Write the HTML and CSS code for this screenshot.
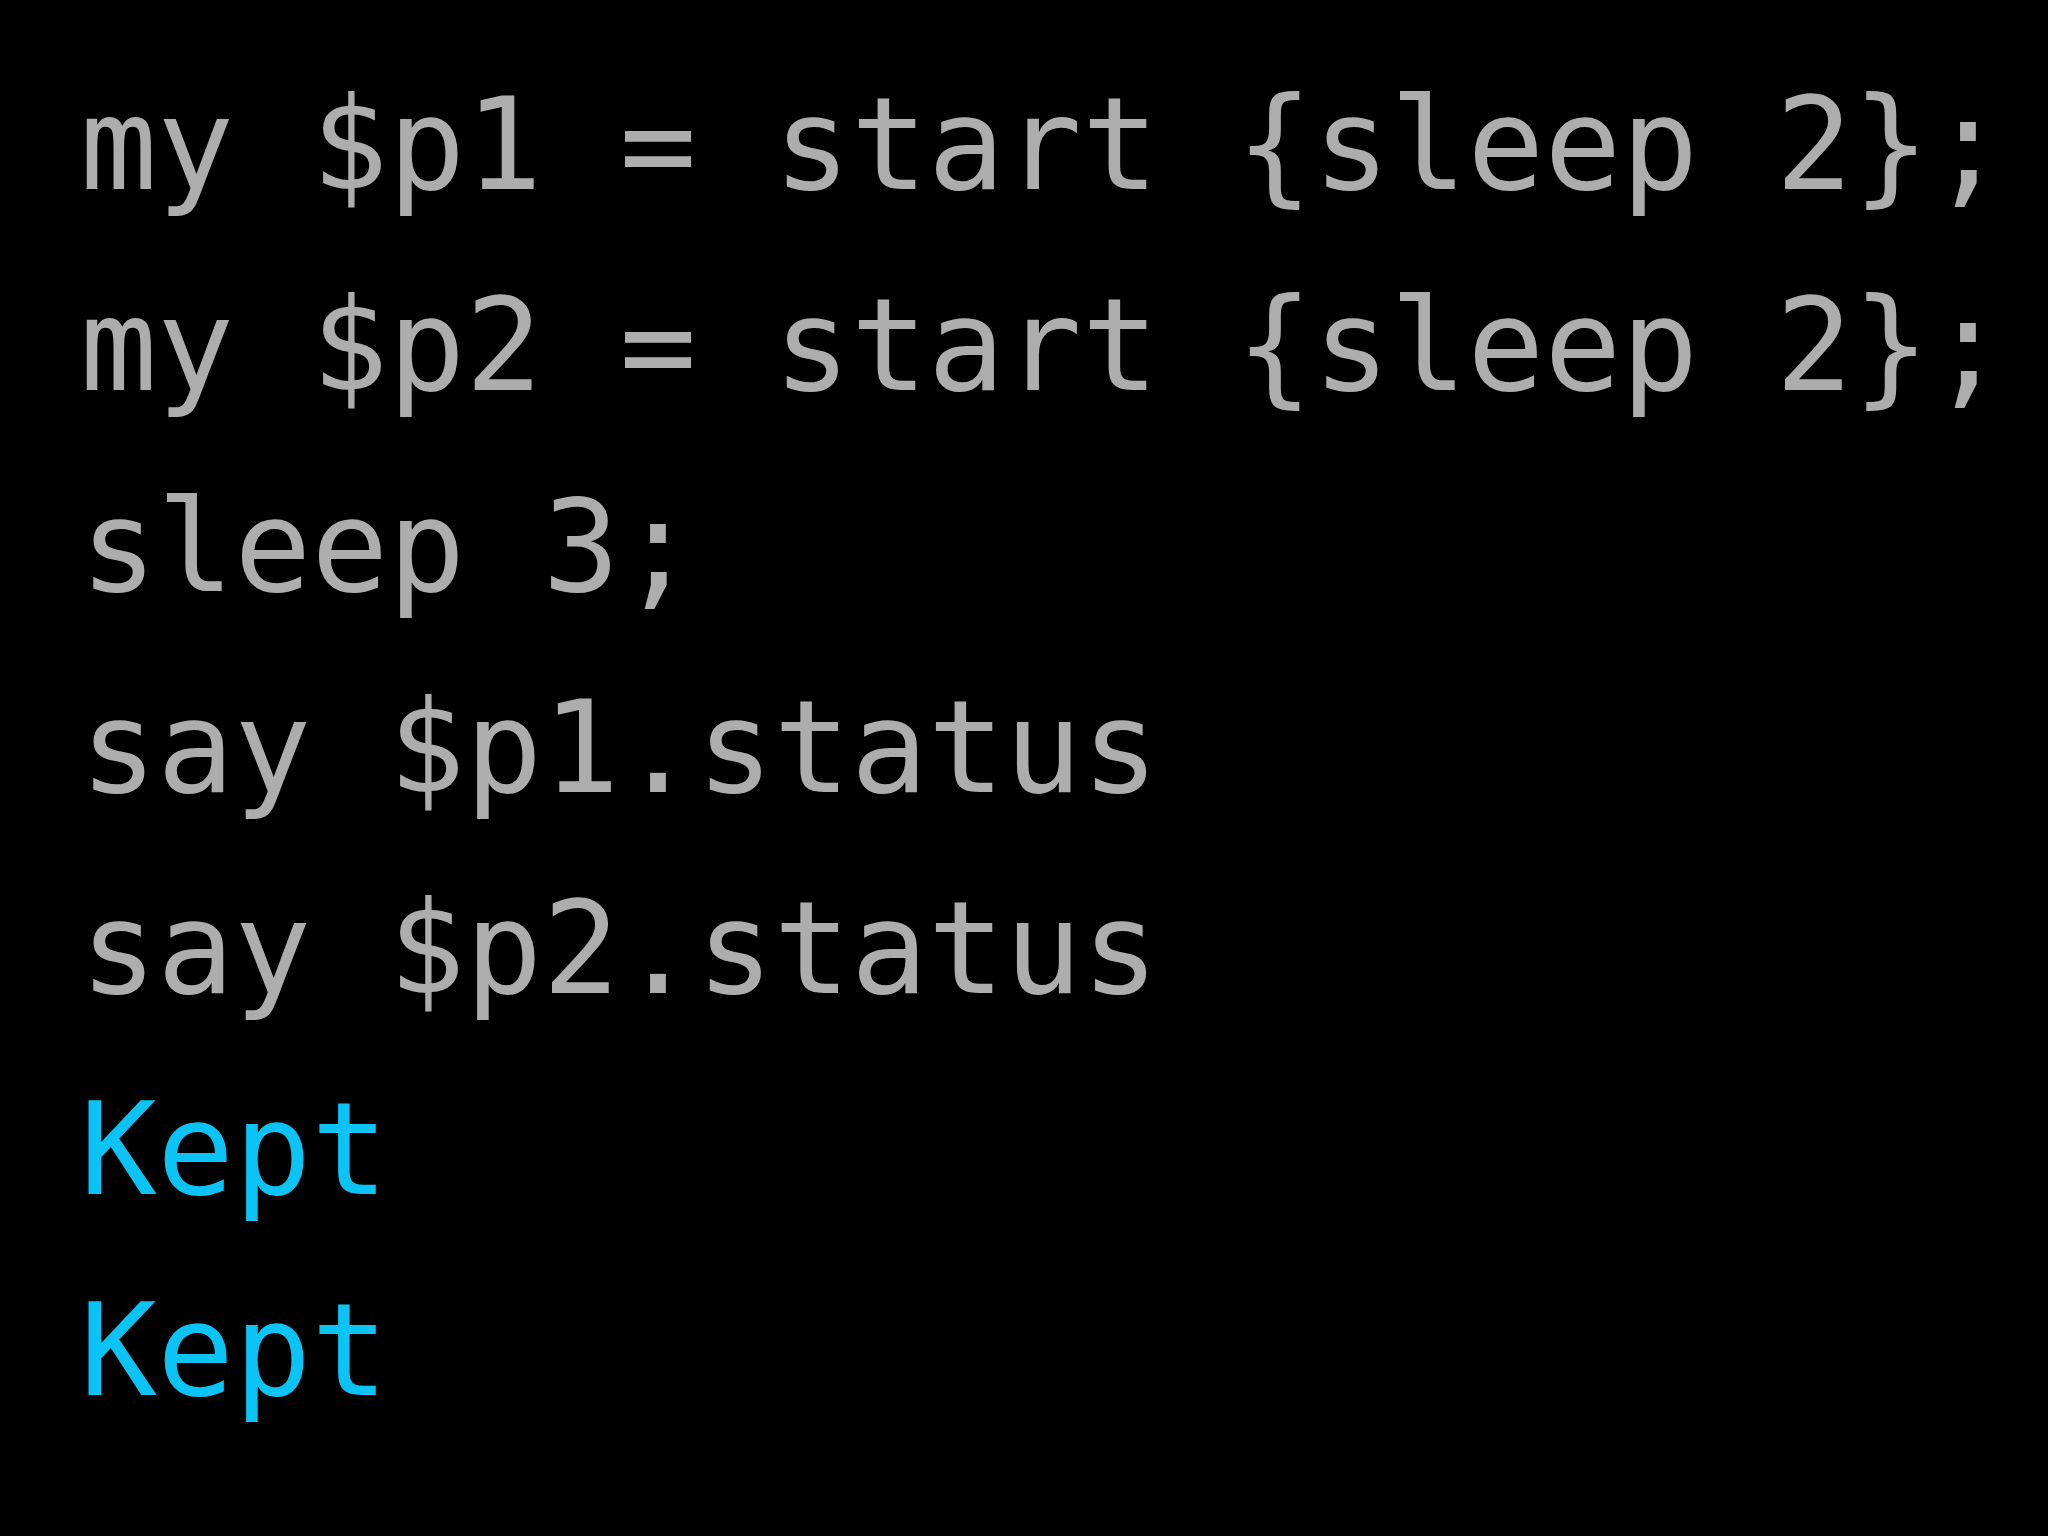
FILE: index.html
```html
<!DOCTYPE html>
<html>
<head>
<meta charset="utf-8">
<link rel="stylesheet" href="styles.css">
</head>
<body>
<main class="slide">
<pre class="code"><span class="line">my $p1 = start {sleep 2};</span>
<span class="line">my $p2 = start {sleep 2};</span>
<span class="line">sleep 3;</span>
<span class="line">say $p1.status</span>
<span class="line">say $p2.status</span>
<span class="line out">Kept</span>
<span class="line out">Kept</span></pre>
</main>
</body>
</html>
```
FILE: styles.css
```css
html, body {
  margin: 0;
  padding: 0;
  background: #000;
}
.slide {
  width: 2048px;
  height: 1536px;
  box-sizing: border-box;
  padding: 44px 0 0 80px;
  background: #000;
  overflow: hidden;
}
.code {
  margin: 0;
  font-family: "DejaVu Sans Mono", monospace;
  font-size: 128px;
  line-height: 201px;
  color: #adadad;
  white-space: pre;
}
.out {
  color: #0bc3f5;
}
```
